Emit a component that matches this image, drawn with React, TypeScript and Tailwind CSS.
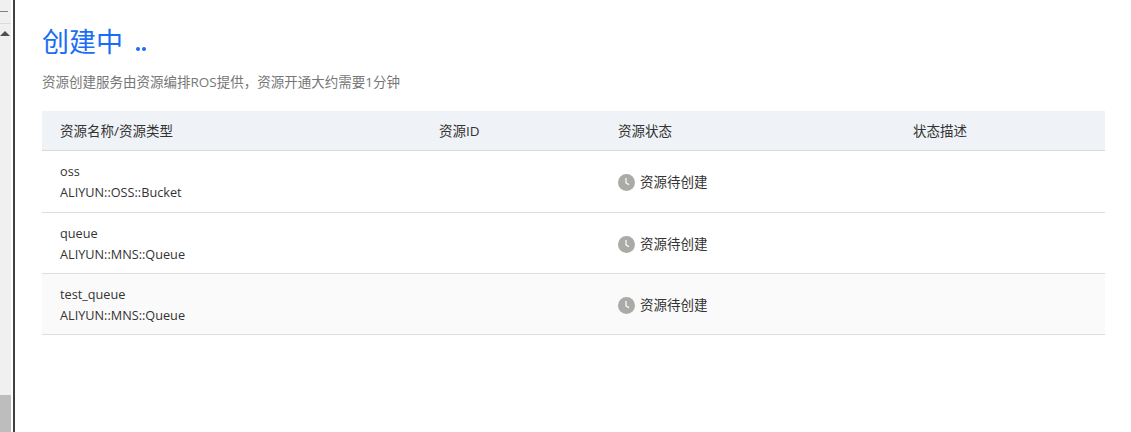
import React from "react";

const font = "font-['Open_Sans','Noto_Sans_CJK_SC',sans-serif]";

const rows = [
  { name: "oss", type: "ALIYUN::OSS::Bucket", cls: "h-[62px] bg-white" },
  { name: "queue", type: "ALIYUN::MNS::Queue", cls: "h-[61px] pt-px bg-white" },
  { name: "test_queue", type: "ALIYUN::MNS::Queue", cls: "h-[61px] pt-px bg-[#fafafa]" },
];

const ClockIcon = () => (
  <svg width="17" height="17" viewBox="0 0 17 17" className="shrink-0">
    <circle cx="8.5" cy="8.5" r="8.5" fill="#aaaaa6" />
    <path d="M8 4v5l3 1.6" fill="none" stroke="#fff" strokeWidth="1.2" />
  </svg>
);

const Scrollbar = () => (
  <div className="flex h-[432px] w-[15px] shrink-0 border-r-2 border-[#404040] bg-white">
    <div className="flex w-[11px] flex-col justify-between bg-[#f0f0f0]">
      <div>
        <div className="flex h-6 items-center border-b border-[#dcdcdc]">
          <div className="h-px w-2 bg-[#808080]" />
        </div>
        <div className="mt-[7px] ml-0 h-0 w-0 border-x-[5px] border-b-[5px] border-x-transparent border-b-[#505050]" />
      </div>
      <div className="h-[37px] bg-[#bdbdbd]" />
    </div>
  </div>
);

export default function App() {
  return (
    <div className={`flex h-[432px] w-[1131px] overflow-hidden bg-white ${font}`}>
      <Scrollbar />
      <div className="flex-1 pt-[22px] pl-[27px] pr-[26px]">
        <div className="flex h-[40px] items-center gap-[13px] text-[27px] leading-[40px] text-[#1a6ef5]">
          <span>创建中</span>
          <span className="mt-[13px] flex gap-[2px]">
            <span className="h-[4px] w-[4px] rounded-full bg-[#1a6ef5]" />
            <span className="h-[4px] w-[4px] rounded-full bg-[#1a6ef5]" />
          </span>
        </div>
        <p className="mt-[10px] text-[13.5px] leading-[20px] text-[#777777]">
          资源创建服务由资源编排ROS提供，资源开通大约需要1分钟
        </p>
        <div className="mt-[19px] text-[13.5px] text-[#333333]">
          <div className="grid h-[40px] grid-cols-[379px_179px_295px_1fr] items-center border-b border-[#d9d9d9] bg-[#eff2f6] pt-px pl-[18px]">
            <span>资源名称/资源类型</span>
            <span>资源ID</span>
            <span>资源状态</span>
            <span>状态描述</span>
          </div>
          {rows.map((r) => (
            <div
              key={r.name}
              className={`grid grid-cols-[379px_179px_295px_1fr] items-center border-b border-[#dddddd] pl-[18px] ${r.cls}`}
            >
              <div className="text-[12.7px] leading-[21px]">
                <div>{r.name}</div>
                <div>{r.type}</div>
              </div>
              <div />
              <div className="flex items-center gap-[5px] pt-px">
                <ClockIcon />
                <span>资源待创建</span>
              </div>
              <div />
            </div>
          ))}
        </div>
      </div>
    </div>
  );
}
